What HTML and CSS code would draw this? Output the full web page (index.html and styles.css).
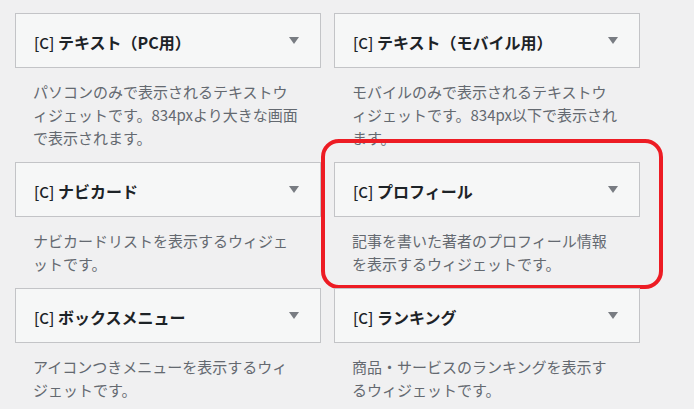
FILE: index.html
```html
<!DOCTYPE html>
<html lang="ja">
<head>
<meta charset="utf-8">
<title>Widgets</title>
<link rel="stylesheet" href="styles.css">
</head>
<body>
<div class="widgets">
  <div class="widget">
    <div class="widget-top"><h3 class="widget-title"><span class="tag">[C]</span> テキスト（PC用）</h3><span class="arrow"></span></div>
    <p class="widget-desc">パソコンのみで表示されるテキストウィジェットです。834pxより大きな画面で表示されます。</p>
  </div>
  <div class="widget">
    <div class="widget-top"><h3 class="widget-title"><span class="tag">[C]</span> テキスト（モバイル用）</h3><span class="arrow"></span></div>
    <p class="widget-desc">モバイルのみで表示されるテキストウィジェットです。834px以下で表示されます。</p>
  </div>
  <div class="widget">
    <div class="widget-top"><h3 class="widget-title"><span class="tag">[C]</span> ナビカード</h3><span class="arrow"></span></div>
    <p class="widget-desc">ナビカードリストを表示するウィジェットです。</p>
  </div>
  <div class="widget highlighted">
    <div class="widget-top"><h3 class="widget-title"><span class="tag">[C]</span> プロフィール</h3><span class="arrow"></span></div>
    <p class="widget-desc">記事を書いた著者のプロフィール情報を表示するウィジェットです。</p>
  </div>
  <div class="widget">
    <div class="widget-top"><h3 class="widget-title"><span class="tag">[C]</span> ボックスメニュー</h3><span class="arrow"></span></div>
    <p class="widget-desc">アイコンつきメニューを表示するウィジェットです。</p>
  </div>
  <div class="widget">
    <div class="widget-top"><h3 class="widget-title"><span class="tag">[C]</span> ランキング</h3><span class="arrow"></span></div>
    <p class="widget-desc">商品・サービスのランキングを表示するウィジェットです。</p>
  </div>
</div>
</body>
</html>
```
FILE: styles.css
```css
html, body {
  margin: 0;
  padding: 0;
  background: #f0f0f1;
}
body {
  font-family: "Noto Sans CJK JP", "Noto Sans", sans-serif;
  width: 694px;
  height: 409px;
  overflow: hidden;
}
.widgets {
  display: grid;
  grid-template-columns: 306px 306px;
  column-gap: 13px;
  row-gap: 13px;
  padding: 13px 15px;
  align-items: start;
}
.widget {
  position: relative;
}
.widget-top {
  box-sizing: border-box;
  height: 55px;
  background: #f6f7f7;
  border: 1px solid #c3c4c7;
  display: flex;
  align-items: center;
  justify-content: space-between;
  padding: 3px 21px 0 18px;
}
.widget-title {
  margin: 0;
  font-size: 16px;
  font-weight: 700;
  color: #1d2327;
  line-height: 20px;
  white-space: nowrap;
}
.tag {
  font-weight: 500;
  font-size: 15px;
}
.arrow {
  width: 0;
  height: 0;
  border-left: 5px solid transparent;
  border-right: 5px solid transparent;
  border-top: 7px solid #787c82;
  margin-top: -4px;
}
.widget-desc {
  margin: 12px 0 0;
  padding: 0 19px 0 18px;
  width: 269px;
  font-size: 15px;
  line-height: 23px;
  color: #646970;
}
.highlighted::after {
  content: "";
  position: absolute;
  left: -13px;
  top: -23px;
  width: 334px;
  height: 142px;
  border: 4px solid #ed1c24;
  border-radius: 18px;
  pointer-events: none;
}
```
